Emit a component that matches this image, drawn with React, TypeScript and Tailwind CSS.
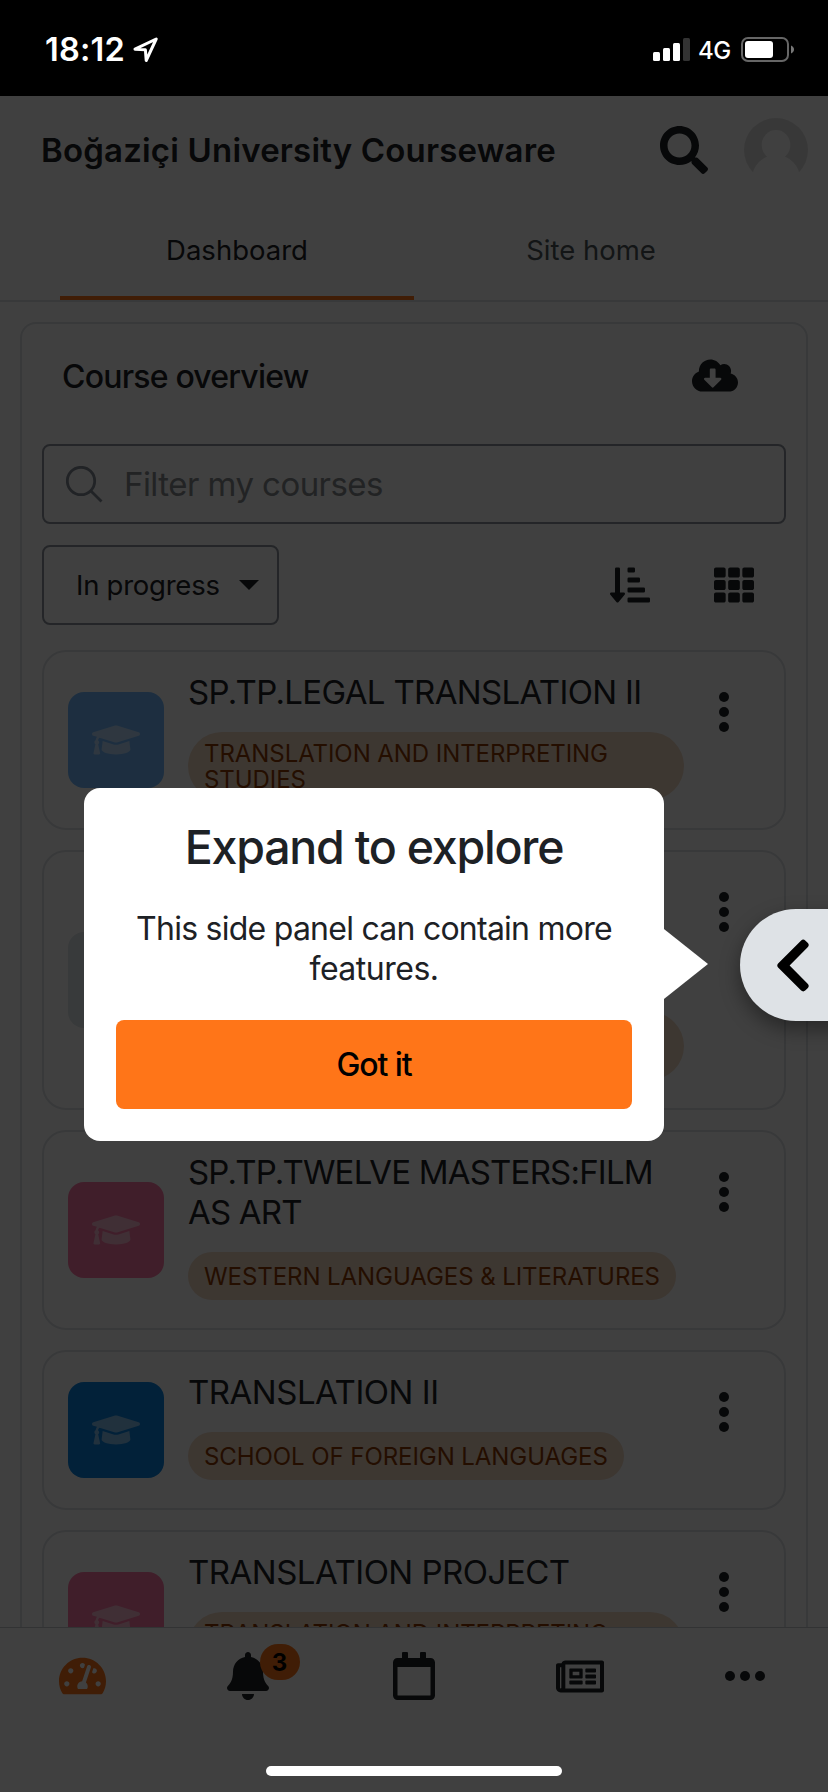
import React from "react";
import {
  FaSearch,
  FaCloudDownloadAlt,
  FaSortAmountDownAlt,
  FaTh,
  FaGraduationCap,
  FaBell,
  FaRegCalendar,
  FaRegNewspaper,
  FaTachometerAlt,
  FaChevronLeft,
} from "react-icons/fa";

type Course = {
  title: string[];
  category: string[];
  tile: string;
  titleClass: string;
  chipClass: string;
};

const courses: Course[] = [
  {
    title: ["SP.TP.LEGAL TRANSLATION II"],
    category: ["TRANSLATION AND INTERPRETING", "STUDIES"],
    tile: "bg-[#74b9ff]",
    titleClass: "h-10 tracking-[-0.66px]",
    chipClass: "h-[68px] w-[496px] rounded-[34px] pt-[9px]",
  },
  {
    title: [],
    category: [],
    tile: "bg-[#dfe6e9]",
    titleClass: "h-30",
    chipClass: "h-[68px] w-[496px] rounded-[34px] pt-[9px]",
  },
  {
    title: ["SP.TP.TWELVE MASTERS:FILM", "AS ART"],
    category: ["WESTERN LANGUAGES & LITERATURES"],
    tile: "bg-[#fd79a8]",
    titleClass: "h-20 tracking-[-0.8px]",
    chipClass: "h-12 w-[488px] rounded-[24px] pt-3",
  },
  {
    title: ["TRANSLATION II"],
    category: ["SCHOOL OF FOREIGN LANGUAGES"],
    tile: "bg-[#0984e3]",
    titleClass: "h-10 tracking-[-0.48px]",
    chipClass: "h-12 w-[436px] rounded-[24px] pt-3",
  },
  {
    title: ["TRANSLATION PROJECT"],
    category: ["TRANSLATION AND INTERPRETING"],
    tile: "bg-[#fd79a8]",
    titleClass: "h-10 tracking-[-0.5px]",
    chipClass: "h-[68px] w-[496px] rounded-[34px] pt-[9px]",
  },
];

function StatusBar() {
  return (
    <header className="flex h-24 items-start justify-between bg-black pl-[45px] pr-[33px] text-white">
      <div className="flex pt-[30px]">
        <span className="w-[88px] whitespace-nowrap text-[32.5px] font-semibold leading-10 tracking-[0.2px]">18:12</span>
        <svg className="mt-[7px]" width="26" height="26" viewBox="0 0 26 26" fill="none" stroke="white" strokeWidth="3" strokeLinejoin="round">
          <path d="M2 12.2 23.2 2 13.2 23.5 12.4 12.8Z" />
        </svg>
      </div>
      <div className="flex pt-[37px]">
        <svg width="38" height="25" viewBox="0 0 38 25" fill="white">
          <rect x="0" y="15" width="7" height="9" rx="1.5" />
          <rect x="10" y="11" width="7" height="13" rx="1.5" />
          <rect x="20" y="6" width="7" height="18" rx="1.5" />
          <rect x="30" y="1" width="7" height="23" rx="1.5" fill="#333" />
        </svg>
        <span className="ml-[7px] w-[43px] whitespace-nowrap text-[24px] font-medium leading-[28px] tracking-[-0.4px]">4G</span>
        <svg width="54" height="25" viewBox="0 0 54 25">
          <rect x="1" y="1" width="46" height="23" rx="6" fill="none" stroke="#666" strokeWidth="2" />
          <rect x="4" y="4" width="28" height="17" rx="3" fill="white" />
          <path d="M50 8.5c4 1.5 4 6.5 0 8z" fill="#777" />
        </svg>
      </div>
    </header>
  );
}

function Dots() {
  return (
    <svg width="10" height="40" viewBox="0 0 10 40" fill="#1d2125">
      <circle cx="5" cy="5" r="5" />
      <circle cx="5" cy="20" r="5" />
      <circle cx="5" cy="35" r="5" />
    </svg>
  );
}

function CourseCard({ course }: { course: Course }) {
  return (
    <article className="flex shrink-0 items-center rounded-[24px] border-2 border-[#dee2e6] pl-6">
      <div className={`flex size-24 items-center justify-center rounded-[16px] ${course.tile}`}>
        <FaGraduationCap className="size-12 text-white/50" />
      </div>
      <div className="ml-6 w-[496px] pb-7 pt-5">
        <h3 className={`whitespace-nowrap text-[33px] leading-10 ${course.titleClass}`}>
          {course.title.map((line) => (
            <span key={line} className="block">{line}</span>
          ))}
        </h3>
        <div className={`mt-5 flex flex-col whitespace-nowrap bg-[#f2dac4] pl-4 text-[24px] leading-[26px] tracking-[-0.07px] text-[#903a02] ${course.chipClass}`}>
          {course.category.map((line) => (
            <span key={line}>{line}</span>
          ))}
        </div>
      </div>
      <div className="ml-[35px] self-start pt-10">
        <Dots />
      </div>
    </article>
  );
}

function TabBar() {
  return (
    <nav className="grid h-[165px] shrink-0 grid-cols-5 border-t border-[#c8cbce] bg-white pt-6">
      <div className="flex h-12 items-center justify-center">
        <FaTachometerAlt className="mr-px h-[42px] w-[47px] text-[#ff7518]" />
      </div>
      <div className="relative flex h-12 items-center justify-center">
        <FaBell className="h-12 w-[42px]" />
        <span className="absolute -top-2 left-[94px] flex h-9 w-10 items-center justify-center rounded-full bg-[#ff7518] pt-0.5 text-[24px] font-bold text-black">3</span>
      </div>
      <div className="flex h-12 items-center justify-center">
        <FaRegCalendar className="h-12 w-[42px]" />
      </div>
      <div className="flex h-12 items-center justify-center">
        <FaRegNewspaper className="h-[43px] w-12" />
      </div>
      <div className="flex h-12 items-center justify-center">
        <svg width="40" height="10" viewBox="0 0 40 10" fill="currentColor">
          <circle cx="5" cy="5" r="5" />
          <circle cx="20" cy="5" r="5" />
          <circle cx="35" cy="5" r="5" />
        </svg>
      </div>
    </nav>
  );
}

export default function App() {
  return (
    <div className="relative flex h-[1792px] w-[828px] flex-col overflow-hidden bg-white font-['Inter','Liberation_Sans',sans-serif] text-[#1d2125]">
      <StatusBar />

      <div className="flex h-[108px] shrink-0 items-center pl-[41px] pr-5">
        <h1 className="flex-1 whitespace-nowrap pt-0.5 text-[33px] font-semibold tracking-[0.18px]">Boğaziçi University Courseware</h1>
        <FaSearch className="size-12" />
        <svg className="ml-9" width="64" height="64" viewBox="0 0 64 64">
          <circle cx="32" cy="32" r="32" fill="#e0e0e0" />
          <circle cx="32" cy="61" r="24" fill="white" />
          <ellipse cx="32" cy="27" rx="14.3" ry="15" fill="white" />
        </svg>
      </div>

      <div className="flex h-[98px] shrink-0 border-b-2 border-[#dee2e6] px-[60px] text-[27.5px]">
        <div className="flex w-[354px] items-center justify-center border-b-4 border-[#ff7518] pt-0.5">
          <span>Dashboard</span>
        </div>
        <div className="flex w-[354px] items-center justify-center border-b-4 border-transparent pt-0.5 text-[#4b5659]">
          <span>Site home</span>
        </div>
      </div>

      <main className="flex min-h-0 flex-1 flex-col overflow-hidden px-5 pt-5">
        <section className="flex min-h-0 flex-1 flex-col rounded-t-[16px] border-2 border-b-0 border-[#dee2e6] px-5">
          <div className="flex h-[120px] shrink-0 items-start justify-between pl-[20px] pr-[48px]">
            <h2 className="mt-[33px] whitespace-nowrap text-[32px] font-medium leading-10 tracking-[-0.8px]">Course overview</h2>
            <FaCloudDownloadAlt className="mt-[33px] h-[37px] w-[46px]" />
          </div>
          <div className="flex h-20 shrink-0 items-center rounded-[8px] border-2 border-[#8f959e] pl-[22px] text-[33px] text-[#878c90]">
            <svg width="37" height="37" viewBox="0 0 37 37" fill="none" stroke="#858c96" strokeWidth="2.8">
              <circle cx="15" cy="15" r="13.7" />
              <path d="M24.7 24.7 35.5 35.5" />
            </svg>
            <span className="ml-[21px] whitespace-nowrap pt-0.5 tracking-[-0.55px]">Filter my courses</span>
          </div>
          <div className="mt-[21px] flex h-20 shrink-0 items-center">
            <div className="flex h-20 w-[237px] items-center justify-between rounded-[8px] border-2 border-[#8f959e] pl-[32px] pr-[18px] text-[27.5px]">
              <span className="whitespace-nowrap pt-0.5 tracking-[-0.25px]">In progress</span>
              <svg width="20" height="10" viewBox="0 0 20 10" fill="currentColor">
                <path d="M0 0h20L10 10z" />
              </svg>
            </div>
            <FaSortAmountDownAlt className="ml-[331px] size-10" />
            <FaTh className="ml-16 size-10" />
          </div>
          <div className="mt-[25px] flex flex-col gap-5">
            {courses.map((course, i) => (
              <CourseCard key={i} course={course} />
            ))}
          </div>
        </section>
      </main>

      <TabBar />

      <div className="absolute inset-x-0 bottom-0 top-24 bg-black/75" />

      <div className="absolute left-[740px] top-[909px] flex h-28 w-28 items-center rounded-l-full bg-[#dee2e6] pl-[34px] shadow-[0_8px_20px_rgba(0,0,0,0.4)]">
        <FaChevronLeft className="h-[61px] w-[38px] text-black" />
      </div>

      <div className="absolute left-[84px] top-[788px] flex h-[353px] w-[580px] flex-col items-center rounded-[16px] bg-white px-8 pt-8">
        <h2 className="whitespace-nowrap text-[46.5px] font-medium leading-[54px] tracking-[-1.25px]">Expand to explore</h2>
        <p className="mt-[35px] whitespace-nowrap text-center text-[32px] leading-10 tracking-[-0.75px]">
          This side panel can contain more
          <br />
          <span className="tracking-[-0.5px]">features.</span>
        </p>
        <button className="mt-[31px] h-[89px] w-full rounded-[8px] bg-[#ff7518] pt-px text-[32px] font-medium tracking-[-1.1px] text-black">Got it</button>
        <svg className="absolute left-[579px] top-[140px]" width="45" height="72" viewBox="0 0 45 72" fill="white">
          <path d="M0 0.2 45 36 0 71.8z" />
        </svg>
      </div>

      <div className="absolute left-[266px] top-[1766px] h-2.5 w-[296px] rounded-full bg-white" />
    </div>
  );
}
